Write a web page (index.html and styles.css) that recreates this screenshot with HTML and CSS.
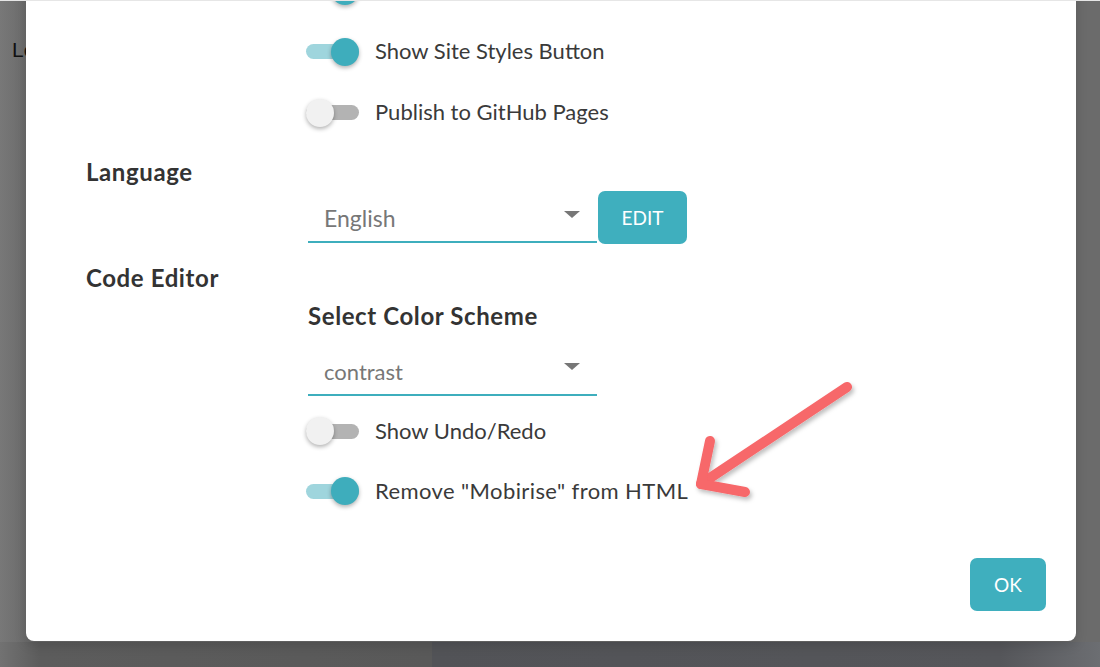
FILE: index.html
```html
<!DOCTYPE html>
<html lang="en">
<head>
<meta charset="utf-8">
<title>Settings</title>
<link rel="stylesheet" href="styles.css">
</head>
<body>
<div class="app">
  <div class="app-main">
    <div class="app-text">Lo</div>
  </div>
  <div class="app-bottom">
    <div class="app-bottom-left"></div>
    <div class="app-bottom-right"></div>
  </div>
</div>

<div class="topline"></div>

<div class="modal">
  <div class="rows rows-first">
    <div class="toggle-row">
      <span class="toggle on"><span class="thumb"></span></span>
    </div>
    <div class="toggle-row">
      <span class="toggle on"><span class="thumb"></span></span>
      <span class="toggle-label">Show Site Styles Button</span>
    </div>
    <div class="toggle-row">
      <span class="toggle"><span class="thumb"></span></span>
      <span class="toggle-label">Publish to GitHub Pages</span>
    </div>
  </div>

  <div class="section-title lang-title">Language</div>
  <div class="indent select-row">
    <div class="select">
      <span class="select-value">English</span>
      <span class="caret"></span>
    </div>
    <button class="btn btn-edit">EDIT</button>
  </div>

  <div class="section-title code-title">Code Editor</div>
  <div class="indent sub-title">Select Color Scheme</div>
  <div class="indent select-row select-row-2">
    <div class="select">
      <span class="select-value">contrast</span>
      <span class="caret"></span>
    </div>
  </div>

  <div class="rows rows-second">
    <div class="toggle-row">
      <span class="toggle"><span class="thumb"></span></span>
      <span class="toggle-label">Show Undo/Redo</span>
    </div>
    <div class="toggle-row">
      <span class="toggle on"><span class="thumb"></span></span>
      <span class="toggle-label wide">Remove "Mobirise" from HTML</span>
    </div>
  </div>

  <div class="footer">
    <button class="btn btn-ok">OK</button>
  </div>
</div>

<svg class="arrow" width="1100" height="667" viewBox="0 0 1100 667" xmlns="http://www.w3.org/2000/svg">
  <defs>
    <filter id="sh" x="-20%" y="-20%" width="140%" height="140%">
      <feDropShadow dx="2" dy="3" stdDeviation="2" flood-color="#000" flood-opacity="0.25"/>
    </filter>
  </defs>
  <g filter="url(#sh)" stroke="#f7676a" stroke-width="10" stroke-linecap="round" stroke-linejoin="round" fill="none">
    <path d="M847 387 L701 484"/>
    <path d="M710 441 L701 484 L745 492"/>
  </g>
</svg>
</body>
</html>
```

FILE: styles.css
```css
* { box-sizing: border-box; }

html, body {
  margin: 0;
  padding: 0;
  height: 100%;
  overflow: hidden;
}

body {
  font-family: "Lato", "Noto Sans", sans-serif;
  background: #6c6c6c;
}

.app {
  display: flex;
  flex-direction: column;
  height: 667px;
}

.app-main {
  flex: 1;
  background: linear-gradient(90deg, #787878 0px, #6b6b6b 26px, #6b6b6b 100%);
  padding: 38px 0 0 12px;
}

.app-text {
  font-family: "Liberation Sans", Arial, sans-serif;
  font-size: 21px;
  color: #111;
  line-height: 24px;
}

.app-bottom {
  height: 25px;
  display: flex;
}

.app-bottom-left {
  width: 432px;
  background: linear-gradient(90deg, #727272 0px, #5c5c5c 40px, #595959 100%);
}

.app-bottom-right {
  flex: 1;
  background: linear-gradient(90deg, #525357 0%, #55565a 85%, #6c6e72 100%);
}

.topline {
  position: absolute;
  left: 0;
  top: 0;
  width: 1100px;
  height: 1px;
  background: #e6e6e6;
  z-index: 3;
}

.modal {
  position: absolute;
  left: 26px;
  top: -40px;
  width: 1050px;
  background: #fff;
  border-radius: 8px;
  padding: 0 30px 30px 60px;
  box-shadow: 0 4px 12px rgba(0, 0, 0, 0.15);
  color: #353535;
}

.rows { margin-left: 220px; }

.toggle-row {
  height: 61px;
  display: flex;
  align-items: center;
  gap: 16px;
}

.rows-second { margin-top: 5px; }
.rows-second .toggle-row { height: 60px; }

.toggle {
  position: relative;
  width: 53px;
  height: 15px;
  border-radius: 8px;
  background: #b3b3b3;
  flex: none;
}

.toggle .thumb {
  position: absolute;
  top: 50%;
  left: 0;
  width: 28px;
  height: 28px;
  margin-top: -14px;
  border-radius: 50%;
  background: #f1f1f1;
  box-shadow: 0 2px 4px rgba(0, 0, 0, 0.3);
}

.toggle.on { background: #9fd5dd; }

.toggle.on .thumb {
  left: auto;
  right: 0;
  background: #3eadbc;
}

.toggle-label {
  font-size: 22px;
  color: #3a3a3a;
  line-height: 30px;
  margin-top: -1px;
}

.toggle-label.wide { letter-spacing: 0.4px; }

.section-title {
  font-weight: bold;
  font-size: 24px;
  line-height: 30px;
  letter-spacing: 0.6px;
  color: #333;
}

.lang-title { margin-top: 14px; }
.code-title { margin-top: 20px; }

.indent { margin-left: 222px; }

.sub-title {
  margin-top: 8px;
  font-weight: bold;
  font-size: 24px;
  line-height: 30px;
  letter-spacing: 0.6px;
  color: #333;
}

.select-row {
  display: flex;
  align-items: flex-end;
  margin-top: 4px;
}

.select-row-2 { margin-top: 15px; }

.select {
  width: 289px;
  height: 50px;
  border-bottom: 2px solid #3eaebd;
  display: flex;
  align-items: center;
  justify-content: space-between;
  padding: 2px 17px 0 16px;
}

.select-value {
  font-size: 23px;
  color: #777;
}

.select-row-2 .select-value { font-size: 22px; }

.caret {
  width: 0;
  height: 0;
  border-left: 8px solid transparent;
  border-right: 8px solid transparent;
  border-top: 7px solid #777;
  margin-top: -8px;
}

.select-row-2 .caret { margin-top: -10px; }

.btn {
  border: none;
  background: #3fafbe;
  color: #fff;
  font-family: inherit;
  font-size: 19px;
  border-radius: 7px;
  height: 53px;
  padding: 0;
  cursor: pointer;
}

.btn-edit {
  width: 89px;
  margin-left: 1px;
  margin-bottom: -1px;
}

.footer {
  margin-top: 37px;
  display: flex;
  justify-content: flex-end;
}

.btn-ok { width: 76px; }

.arrow {
  position: absolute;
  left: 0;
  top: 0;
  pointer-events: none;
  z-index: 2;
}
```
